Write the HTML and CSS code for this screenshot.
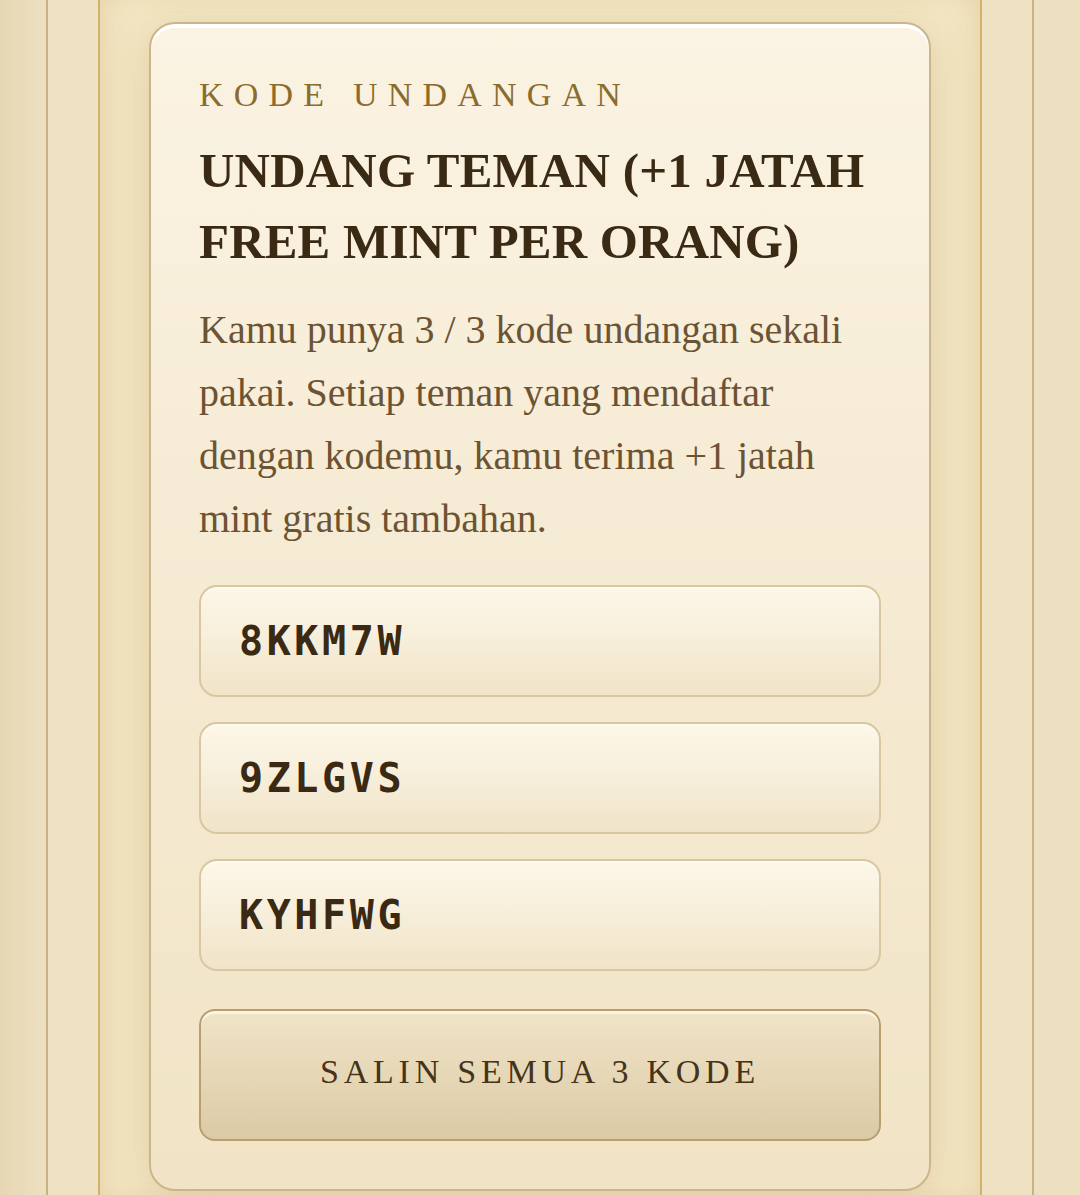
FILE: index.html
```html
<!DOCTYPE html>
<html lang="id">
<head>
<meta charset="utf-8">
<title>Kode Undangan</title>
<link rel="stylesheet" href="styles.css">
</head>
<body>
<div class="outer">
  <div class="inner">
    <section class="card">
      <div class="eyebrow">Kode Undangan</div>
      <h2 class="title">Undang Teman (+1 Jatah Free Mint per Orang)</h2>
      <p class="desc">Kamu punya 3 / 3 kode undangan sekali pakai. Setiap teman yang mendaftar dengan kodemu, kamu terima +1 jatah mint gratis tambahan.</p>
      <ul class="codes">
        <li class="code">8KKM7W</li>
        <li class="code">9ZLGVS</li>
        <li class="code">KYHFWG</li>
      </ul>
      <button class="copy-btn" type="button">Salin Semua 3 Kode</button>
    </section>
  </div>
</div>
</body>
</html>
```

FILE: styles.css
```css
* { box-sizing: border-box; }
html, body { margin: 0; padding: 0; }
body {
  background: linear-gradient(90deg, #e6d6b4 0%, #ede0c0 4%);
  height: 1195px;
  overflow: hidden;
}
.outer {
  margin: 0 46px;
  height: 100%;
  border-left: 2px solid #c8b386;
  border-right: 2px solid #c8b386;
  background: #efe2c3;
  padding: 0 50px;
}
.inner {
  height: 100%;
  border-left: 2px solid #d3b169;
  border-right: 2px solid #d3b169;
  background: #f3e6c3;
  box-shadow: inset 22px 0 30px -18px rgba(190,160,100,0.25), inset -22px 0 30px -18px rgba(190,160,100,0.25);
  padding: 22px 49px 0;
}
.card {
  border: 2px solid #cbb58c;
  border-radius: 26px;
  background: linear-gradient(180deg, #fbf3e3 0%, #f5ead2 50%, #f1e4c6 100%);
  box-shadow: 0 8px 40px rgba(160,125,60,0.22), inset 0 4px 0 #ffffff;
  padding: 51px 48px 48px;
}
.eyebrow {
  font-family: "Liberation Serif", serif;
  font-size: 34px;
  line-height: 40px;
  letter-spacing: 0.3em;
  text-transform: uppercase;
  color: #8a6c2c;
  margin: 0;
}
.title {
  font-family: "Liberation Serif", serif;
  font-weight: 700;
  font-size: 49px;
  line-height: 71px;
  letter-spacing: 0.2px;
  text-transform: uppercase;
  color: #3a2913;
  margin: 20px 0 21px;
}
.desc {
  font-family: "Liberation Serif", serif;
  font-size: 40px;
  line-height: 63px;
  color: #6c5333;
  margin: 0 0 35px;
}
.codes {
  list-style: none;
  margin: 0;
  padding: 0;
  display: flex;
  flex-direction: column;
  gap: 25px;
}
.code {
  height: 112px;
  display: flex;
  align-items: center;
  padding-left: 38px;
  border: 2px solid #d9c7a1;
  border-radius: 18px;
  background: linear-gradient(180deg, #fdf7e8 0%, #f7eeda 50%, #f0e4c8 100%);
  box-shadow: inset 0 2px 0 #fffaf0;
  font-family: "DejaVu Sans Mono", monospace;
  font-weight: 700;
  font-size: 40px;
  letter-spacing: 3.6px;
  color: #3a2913;
}
.copy-btn {
  display: block;
  width: 100%;
  height: 132px;
  margin-top: 38px;
  padding-bottom: 8px;
  border: 2px solid #b89e6f;
  border-radius: 16px;
  background: linear-gradient(180deg, #f0e4c8 0%, #e6d7b6 50%, #dccaa6 100%);
  box-shadow: inset 0 3px 0 #fbf4e4;
  font-family: "Liberation Serif", serif;
  font-size: 34px;
  letter-spacing: 0.14em;
  text-transform: uppercase;
  color: #45331a;
  cursor: pointer;
}
```
